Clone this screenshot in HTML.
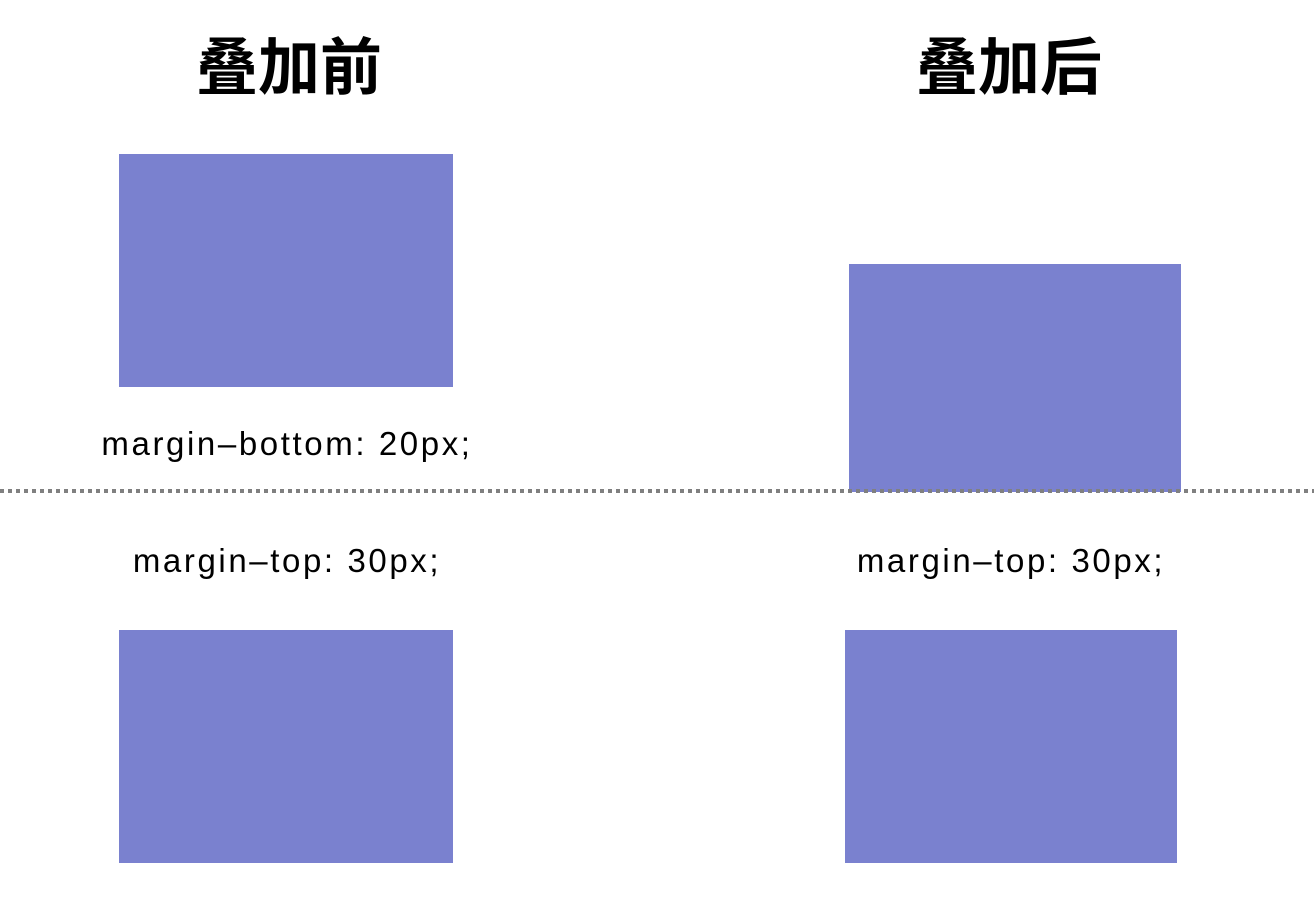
<!DOCTYPE html>
<html><head><meta charset="utf-8"><style>
body{margin:0;width:1314px;height:900px;background:#fff;position:relative;overflow:hidden;font-family:"Liberation Sans","Noto Sans CJK SC",sans-serif;color:#000}
.b{position:absolute;background:#7a81cf}
.t{position:absolute;font-size:62px;font-weight:bold;width:400px;text-align:center;line-height:1;font-family:"Noto Sans CJK SC",sans-serif}
.m{position:absolute;font-size:33px;width:500px;text-align:center;line-height:1;letter-spacing:2.6px}
.line{position:absolute;left:0;top:489px;width:1314px;height:4px;background:repeating-linear-gradient(90deg,#808080 0 4px,transparent 4px 8px)}
</style></head><body>
<div class="t" style="left:89px;top:31px">叠加前</div>
<div class="t" style="left:809px;top:31px">叠加后</div>
<div class="b" style="left:119px;top:154px;width:334px;height:233px"></div>
<div class="b" style="left:849px;top:264px;width:332px;height:228px"></div>
<div class="m" style="left:37px;top:427px">margin–bottom: 20px;</div>
<div class="line"></div>
<div class="m" style="left:37px;top:544px">margin–top: 30px;</div>
<div class="m" style="left:761px;top:544px">margin–top: 30px;</div>
<div class="b" style="left:119px;top:630px;width:334px;height:233px"></div>
<div class="b" style="left:845px;top:630px;width:332px;height:233px"></div>
</body></html>
